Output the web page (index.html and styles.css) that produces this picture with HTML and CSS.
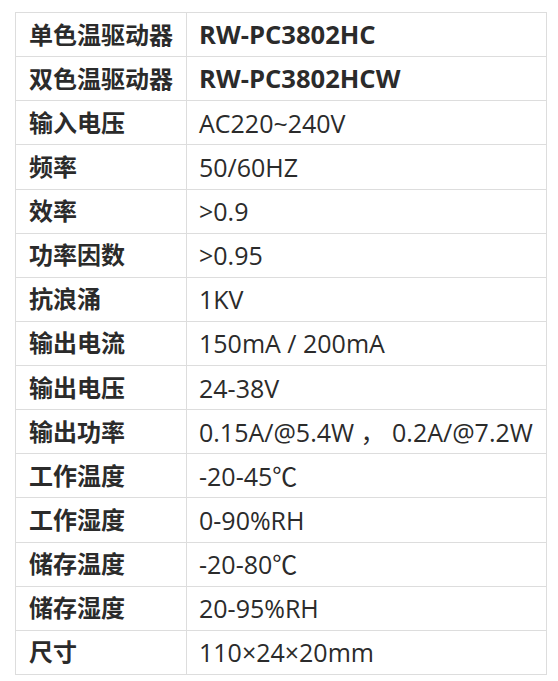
FILE: index.html
```html
<!DOCTYPE html>
<html lang="zh">
<head>
<meta charset="utf-8">
<title>规格</title>
<link rel="stylesheet" href="styles.css">
</head>
<body>
<table class="spec">
  <tbody>
    <tr class="strong"><th>单色温驱动器</th><td>RW-PC3802HC</td></tr>
    <tr class="strong"><th>双色温驱动器</th><td>RW-PC3802HCW</td></tr>
    <tr><th>输入电压</th><td>AC220~240V</td></tr>
    <tr><th>频率</th><td>50/60HZ</td></tr>
    <tr><th>效率</th><td>&gt;0.9</td></tr>
    <tr><th>功率因数</th><td>&gt;0.95</td></tr>
    <tr><th>抗浪涌</th><td>1KV</td></tr>
    <tr><th>输出电流</th><td>150mA / 200mA</td></tr>
    <tr><th>输出电压</th><td>24-38V</td></tr>
    <tr><th>输出功率</th><td>0.15A/@5.4W ， 0.2A/@7.2W</td></tr>
    <tr><th>工作温度</th><td>-20-45℃</td></tr>
    <tr><th>工作湿度</th><td>0-90%RH</td></tr>
    <tr><th>储存温度</th><td>-20-80℃</td></tr>
    <tr><th>储存湿度</th><td>20-95%RH</td></tr>
    <tr><th>尺寸</th><td>110×24×20mm</td></tr>
  </tbody>
</table>
</body>
</html>
```
FILE: styles.css
```css
html, body {
  margin: 0;
  padding: 0;
  background: #ffffff;
}
body {
  padding: 12px 11px 0 15px;
  font-family: "Open Sans", "Noto Sans CJK SC", sans-serif;
  color: #2b2b2b;
}
.spec {
  border-collapse: collapse;
  width: 532px;
}
.spec th,
.spec td {
  border: 1px solid #dddddd;
  padding: 0 12px;
  height: 43.13px;
  line-height: 28px;
  text-align: left;
  vertical-align: middle;
  white-space: nowrap;
}
.spec th {
  width: 145px;
  font-size: 24px;
  font-weight: 700;
  padding-left: 13px;
}
.spec td {
  font-size: 25px;
  font-weight: 400;
}
.spec .strong td {
  font-size: 25.6px;
  font-weight: 700;
}
```
